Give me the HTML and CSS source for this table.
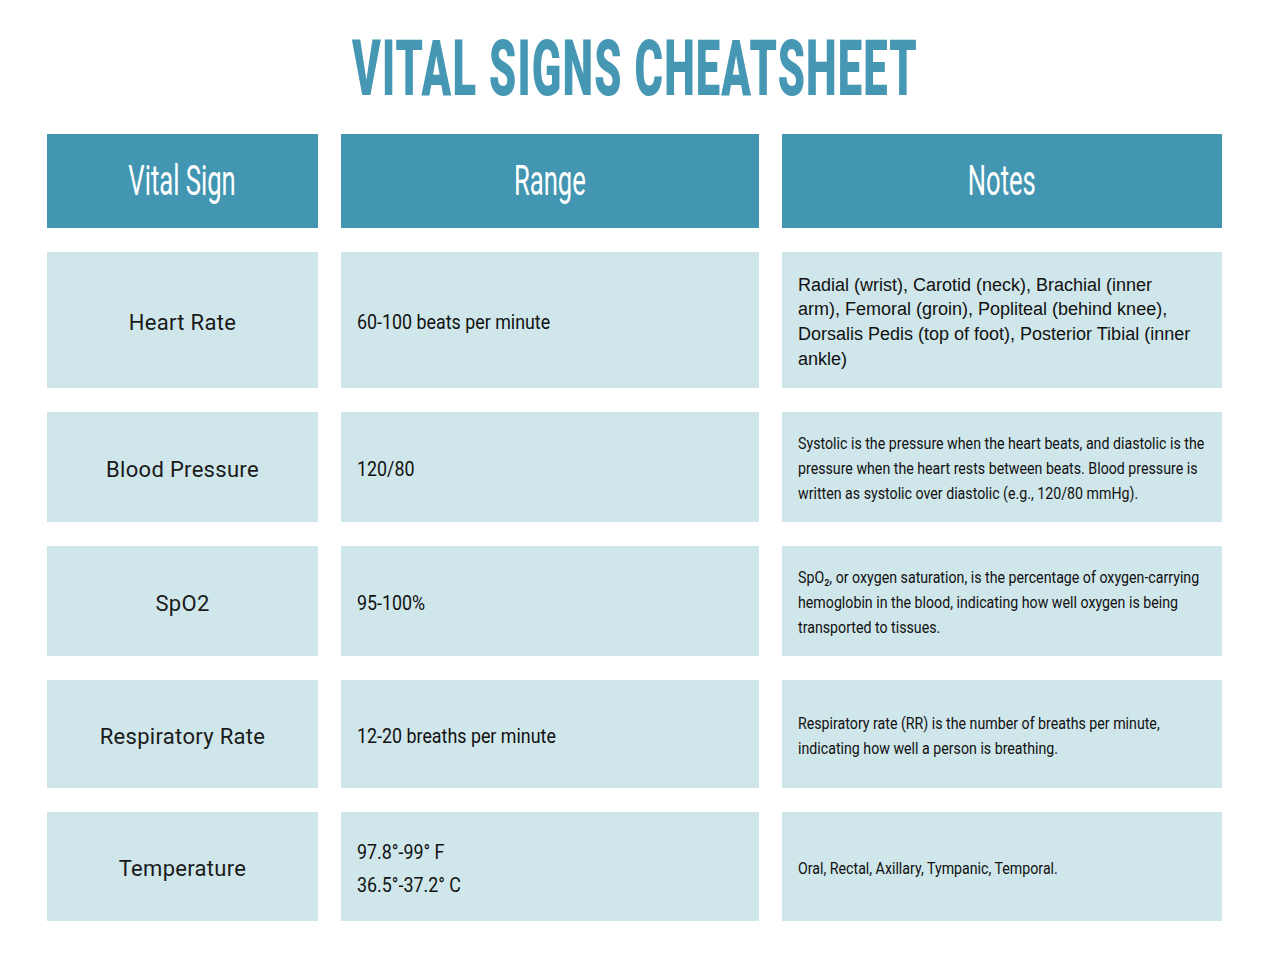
FILE: index.html
```html
<!DOCTYPE html>
<html lang="en">
<head>
<meta charset="utf-8">
<title>Vital Signs Cheatsheet</title>
<link rel="stylesheet" href="styles.css">
</head>
<body>
<main class="sheet">
  <h1 class="title"><span class="fit">VITAL SIGNS CHEATSHEET</span></h1>
  <div class="table">
    <div class="head"><span class="fit">Vital Sign</span></div>
    <div class="head"><span class="fit">Range</span></div>
    <div class="head"><span class="fit">Notes</span></div>

    <div class="cell sign">Heart Rate</div>
    <div class="cell range"><span class="fit">60-100 beats per minute</span></div>
    <div class="cell note plain"><span class="lines">Radial (wrist), Carotid (neck), Brachial (inner<br>arm), Femoral (groin), Popliteal (behind knee),<br>Dorsalis Pedis (top of foot), Posterior Tibial (inner<br>ankle)</span></div>

    <div class="cell sign">Blood Pressure</div>
    <div class="cell range"><span class="fit">120/80</span></div>
    <div class="cell note"><span class="fit">Systolic is the pressure when the heart beats, and diastolic is the<br>pressure when the heart rests between beats. Blood pressure is<br>written as systolic over diastolic (e.g., 120/80 mmHg).</span></div>

    <div class="cell sign">SpO2</div>
    <div class="cell range"><span class="fit">95-100%</span></div>
    <div class="cell note"><span class="fit">SpO₂, or oxygen saturation, is the percentage of oxygen-carrying<br>hemoglobin in the blood, indicating how well oxygen is being<br>transported to tissues.</span></div>

    <div class="cell sign">Respiratory Rate</div>
    <div class="cell range"><span class="fit">12-20 breaths per minute</span></div>
    <div class="cell note"><span class="fit">Respiratory rate (RR) is the number of breaths per minute,<br>indicating how well a person is breathing.</span></div>

    <div class="cell sign">Temperature</div>
    <div class="cell range"><span class="fit">97.8°-99° F<br>36.5°-37.2° C</span></div>
    <div class="cell note"><span class="fit">Oral, Rectal, Axillary, Tympanic, Temporal.</span></div>
  </div>
</main>
</body>
</html>
```
FILE: styles.css
```css
* { box-sizing: border-box; }
html, body { margin: 0; padding: 0; background: #ffffff; }
body { width: 1272px; height: 960px; overflow: hidden; }

.sheet {
  padding: 0 50px 0 47px;
}

.fit {
  display: inline-block;
  white-space: nowrap;
  transform: scaleX(var(--s, 1));
  transform-origin: left center;
}

.title {
  margin: 0;
  height: 134px;
  padding-top: 30px;
  display: flex;
  justify-content: center;
  font-family: "Roboto", "Liberation Sans", sans-serif;
  font-weight: 900;
  font-size: 78px;
  line-height: 78px;
  color: #4597b3;
}
.title .fit {
  --s: 0.558;
  transform-origin: center center;
  letter-spacing: 2px;
}

.table {
  display: grid;
  grid-template-columns: 271px 418px 440px;
  grid-template-rows: 94px 136px 110px 110px 108px 109px;
  column-gap: 23px;
  row-gap: 24px;
}

.head {
  background: #4396b2;
  color: #ffffff;
  display: flex;
  align-items: center;
  justify-content: center;
  font-family: "Roboto", "Liberation Sans", sans-serif;
  font-weight: 400;
  font-size: 42px;
  line-height: 42px;
}
.head .fit {
  --s: 0.61;
  transform-origin: center center;
}

.cell {
  background: #cfe6ea;
  color: #111111;
  display: flex;
  align-items: center;
  padding: 4px 16px 0;
}

.sign {
  justify-content: center;
  font-family: "Roboto", "Liberation Sans", sans-serif;
  font-size: 22px;
  letter-spacing: 0.3px;
  color: #1a1a1a;
}

.range {
  font-family: "Roboto", "Liberation Sans", sans-serif;
  font-size: 21px;
  line-height: 33px;
}
.range .fit { --s: 0.85; }

.note {
  font-family: "Roboto", "Liberation Sans", sans-serif;
  font-size: 17px;
  line-height: 25px;
  padding-top: 3px;
}
.note .fit { --s: 0.835; }

.note.plain {
  font-family: "Liberation Sans", Arial, sans-serif;
  font-size: 18px;
  line-height: 24.6px;
  padding-top: 4px;
}
.lines { white-space: nowrap; }
```
